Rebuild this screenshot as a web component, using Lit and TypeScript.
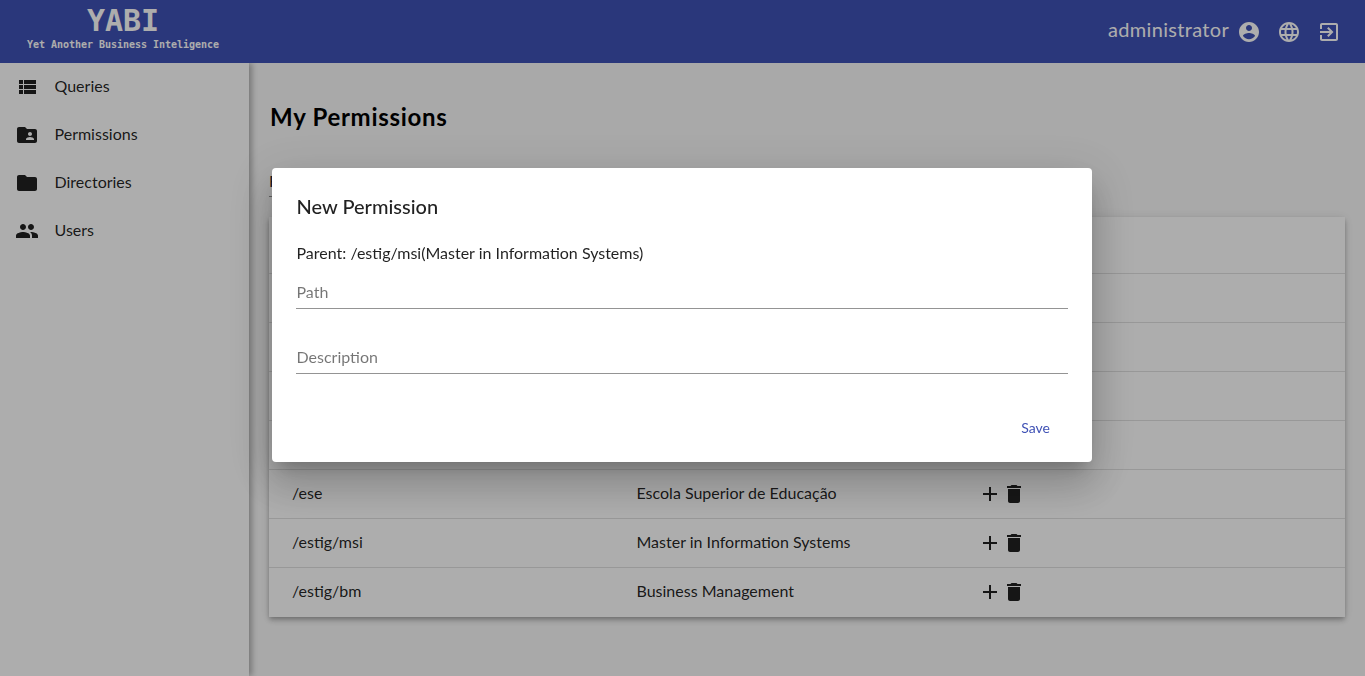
import { LitElement, html, css, svg } from "lit";
import { customElement } from "lit/decorators.js";

// material icon paths
const ICONS: Record<string, string> = {
  list: "M4 14h4v-4H4v4zm0 5h4v-4H4v4zM4 9h4V5H4v4zm5 5h12v-4H9v4zm0 5h12v-4H9v4zM9 5v4h12V5H9z",
  folderShared: "M20 6h-8l-2-2H4c-1.1 0-1.99.9-1.99 2L2 18c0 1.1.9 2 2 2h16c1.1 0 2-.9 2-2V8c0-1.1-.9-2-2-2zm-5 3c1.1 0 2 .9 2 2s-.9 2-2 2-2-.9-2-2 .9-2 2-2zm4 8h-8v-1c0-1.33 2.67-2 4-2s4 .67 4 2v1z",
  folder: "M10 4H4c-1.1 0-1.99.9-1.99 2L2 18c0 1.1.9 2 2 2h16c1.1 0 2-.9 2-2V8c0-1.1-.9-2-2-2h-8l-2-2z",
  people: "M16 11c1.66 0 2.99-1.34 2.99-3S17.66 5 16 5c-1.66 0-3 1.34-3 3s1.34 3 3 3zm-8 0c1.66 0 2.99-1.34 2.99-3S9.66 5 8 5C6.34 5 5 6.34 5 8s1.34 3 3 3zm0 2c-2.33 0-7 1.17-7 3.5V19h14v-2.5c0-2.33-4.67-3.5-7-3.5zm8 0c-.29 0-.62.02-.97.05 1.16.84 1.97 1.97 1.97 3.45V19h6v-2.5c0-2.33-4.67-3.5-7-3.5z",
  account: "M12 2C6.48 2 2 6.48 2 12s4.48 10 10 10 10-4.48 10-10S17.52 2 12 2zm0 3c1.66 0 3 1.34 3 3s-1.34 3-3 3-3-1.34-3-3 1.34-3 3-3zm0 14.2c-2.5 0-4.71-1.28-6-3.22.03-1.99 4-3.08 6-3.08 1.99 0 5.97 1.09 6 3.08-1.29 1.94-3.5 3.22-6 3.22z",
  language: "M11.99 2C6.47 2 2 6.48 2 12s4.47 10 9.99 10C17.52 22 22 17.52 22 12S17.52 2 11.99 2zm6.93 6h-2.95c-.32-1.25-.78-2.45-1.38-3.56 1.84.63 3.37 1.91 4.33 3.56zM12 4.04c.83 1.2 1.48 2.53 1.91 3.96h-3.82c.43-1.43 1.08-2.76 1.91-3.96zM4.26 14C4.1 13.36 4 12.69 4 12s.1-1.36.26-2h3.38c-.08.66-.14 1.32-.14 2 0 .68.06 1.34.14 2H4.26zm.82 2h2.95c.32 1.25.78 2.45 1.38 3.56-1.84-.63-3.37-1.9-4.33-3.56zm2.95-8H5.08c.96-1.66 2.49-2.93 4.33-3.56C8.81 5.55 8.35 6.75 8.03 8zM12 19.96c-.83-1.2-1.48-2.53-1.91-3.96h3.82c-.43 1.43-1.08 2.76-1.91 3.96zM14.34 14H9.66c-.09-.66-.16-1.32-.16-2 0-.68.07-1.35.16-2h4.68c.09.65.16 1.32.16 2 0 .68-.07 1.34-.16 2zm.25 5.56c.6-1.11 1.06-2.31 1.38-3.56h2.95c-.96 1.65-2.49 2.93-4.33 3.56zM16.36 14c.08-.66.14-1.32.14-2 0-.68-.06-1.34-.14-2h3.38c.16.64.26 1.31.26 2s-.1 1.36-.26 2h-3.38z",
  exit: "M10.09 15.59L11.5 17l5-5-5-5-1.41 1.41L12.67 11H3v2h9.67l-2.58 2.59zM19 3H5c-1.11 0-2 .9-2 2v4h2V5h14v14H5v-4H3v4c0 1.1.89 2 2 2h14c1.1 0 2-.9 2-2V5c0-1.1-.9-2-2-2z",
  add: "M19 13h-6v6h-2v-6H5v-2h6V5h2v6h6v2z",
  trash: "M6 19c0 1.1.9 2 2 2h8c1.1 0 2-.9 2-2V7H6v12zM19 4h-3.5l-1-1h-5l-1 1H5v2h14V4z",
};

const icon = (name: string) =>
  html`<svg class="icon" viewBox="0 0 24 24" fill="currentColor">${svg`<path d=${ICONS[name]}></path>`}</svg>`;

const NAV = [
  { icon: "list", label: "Queries" },
  { icon: "folderShared", label: "Permissions" },
  { icon: "folder", label: "Directories" },
  { icon: "people", label: "Users" },
];

// the first rows sit behind the dialog, so only their dividers show
const ROWS = [
  { path: "", description: "" },
  { path: "", description: "" },
  { path: "", description: "" },
  { path: "", description: "" },
  { path: "/ese", description: "Escola Superior de Educação" },
  { path: "/estig/msi", description: "Master in Information Systems" },
  { path: "/estig/bm", description: "Business Management" },
];

@customElement("app-root")
export class AppRoot extends LitElement {
  static styles = css`
    :host {
      display: block;
      height: 100vh;
      overflow: hidden;
      font-family: "Lato", "Liberation Sans", sans-serif;
      font-size: 16px;
      color: rgba(0, 0, 0, 0.87);
      background: #fafafa;
    }
    .icon {
      display: block;
      width: 24px;
      height: 24px;
      flex: none;
    }
    .toolbar {
      height: 63px;
      background: #3f51b5;
      color: #fff;
      display: flex;
      align-items: center;
      justify-content: space-between;
      padding: 0 24px 0 27px;
      position: relative;
      z-index: 2;
    }
    .brand {
      display: flex;
      flex-direction: column;
      align-items: center;
      font-family: "DejaVu Sans Mono", monospace;
      font-weight: bold;
    }
    .brand-name {
      font-size: 30px;
      line-height: 30px;
      margin-top: -7px;
    }
    .brand-sub {
      font-size: 10px;
      line-height: 12px;
      letter-spacing: -0.02px;
      margin-top: 3px;
    }
    .user {
      display: flex;
      align-items: center;
    }
    .user-name {
      font-size: 20px;
      line-height: 24px;
      letter-spacing: 0.32px;
      margin: -6px 8px 0 0;
    }
    .user .icon + .icon {
      margin-left: 16px;
    }
    .body {
      display: flex;
      height: 613px;
    }
    .sidenav {
      width: 249px;
      flex: none;
      background: #fff;
      box-shadow: 3px 0 6px rgba(0, 0, 0, 0.3);
      position: relative;
      z-index: 1;
    }
    .nav-item {
      height: 48px;
      display: flex;
      align-items: center;
      padding-left: 15px;
      gap: 15.5px;
    }
    .nav-item span {
      margin-bottom: 3px;
    }
    .content {
      flex: 1;
      padding: 38px 20px 0;
    }
    h1 {
      margin: 0 0 39px 1px;
      font-size: 24px;
      line-height: 32px;
      font-weight: bold;
      letter-spacing: 0.7px;
      color: #000;
    }
    .filter {
      width: 180px;
      height: 25px;
      box-sizing: border-box;
      border-bottom: 1px solid rgba(0, 0, 0, 0.42);
      line-height: 18px;
      margin-bottom: 20px;
    }
    .table {
      background: #fff;
      box-shadow: 0 2px 4px -1px rgba(0, 0, 0, 0.2), 0 4px 5px rgba(0, 0, 0, 0.14), 0 1px 10px rgba(0, 0, 0, 0.12);
    }
    .row {
      display: grid;
      grid-template-columns: 344.5px 341.5px 1fr;
      align-items: center;
      height: 49px;
      box-sizing: border-box;
      padding-left: 23px;
      border-bottom: 1px solid rgba(0, 0, 0, 0.12);
    }
    .row.head {
      height: 57px;
    }
    .row:last-child {
      border-bottom-color: transparent;
    }
    .row span {
      margin-bottom: 3px;
    }
    .actions {
      display: flex;
    }
    .backdrop {
      position: fixed;
      inset: 0;
      z-index: 10;
      background: rgba(0, 0, 0, 0.32);
      display: flex;
      justify-content: center;
      align-items: flex-start;
      padding-top: 168px;
    }
    .dialog {
      width: 820px;
      height: 294px;
      margin-right: 1px;
      box-sizing: border-box;
      padding: 24px;
      background: #fff;
      border-radius: 4px;
      box-shadow: 0 11px 15px -7px rgba(0, 0, 0, 0.2), 0 24px 38px 3px rgba(0, 0, 0, 0.14), 0 9px 46px 8px rgba(0, 0, 0, 0.12);
    }
    .dialog h2 {
      margin: -1px 0 21px;
      padding-left: 0.5px;
      font-size: 20px;
      line-height: 30px;
      font-weight: 500;
    }
    .parent {
      padding-left: 0.5px;
      line-height: 22px;
      margin-bottom: 2px;
    }
    .field {
      padding: 16px 0 6px 0.5px;
      line-height: 20px;
      color: rgba(0, 0, 0, 0.54);
      border-bottom: 1px solid rgba(0, 0, 0, 0.42);
      margin-bottom: 22px;
    }
    .dialog-actions {
      display: flex;
      justify-content: flex-end;
      margin-top: 36px;
    }
    .save {
      height: 36px;
      padding: 0 18px 2px;
      border: 0;
      background: none;
      font: inherit;
      font-size: 14px;
      color: #3f51b5;
    }
  `;

  render() {
    return html`
      <header class="toolbar">
        <div class="brand">
          <div class="brand-name">YABI</div>
          <div class="brand-sub">Yet Another Business Inteligence</div>
        </div>
        <div class="user">
          <span class="user-name">administrator</span>
          ${icon("account")} ${icon("language")} ${icon("exit")}
        </div>
      </header>
      <div class="body">
        <nav class="sidenav">
          ${NAV.map((n) => html`<div class="nav-item">${icon(n.icon)}<span>${n.label}</span></div>`)}
        </nav>
        <main class="content">
          <h1>My Permissions</h1>
          <div class="filter">Filter</div>
          <div class="table">
            <div class="row head"></div>
            ${ROWS.map(
              (r) => html`<div class="row">
                <span>${r.path}</span>
                <span>${r.description}</span>
                <div class="actions">${icon("add")}${icon("trash")}</div>
              </div>`
            )}
          </div>
        </main>
      </div>
      <div class="backdrop">
        <div class="dialog">
          <h2>New Permission</h2>
          <div class="parent">Parent: /estig/msi(Master in Information Systems)</div>
          <div class="field">Path</div>
          <div class="field">Description</div>
          <div class="dialog-actions"><button class="save">Save</button></div>
        </div>
      </div>
    `;
  }
}
